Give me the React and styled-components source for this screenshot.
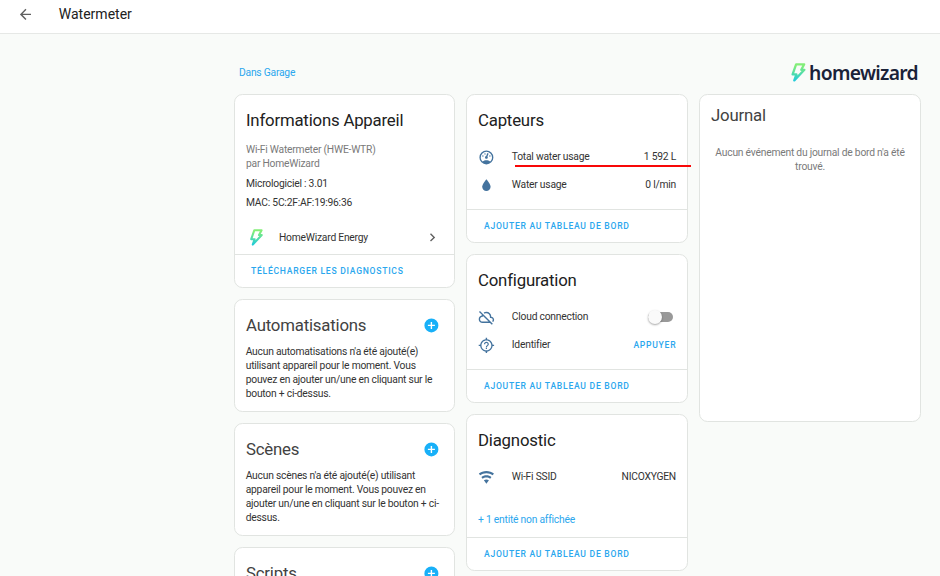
import React from 'react';
import styled, { createGlobalStyle } from 'styled-components';

const Global = createGlobalStyle`
  *, *::before, *::after { box-sizing: border-box; }
  body { margin: 0; background: #f9fbf9; overflow: hidden; font-family: Roboto, sans-serif; color: #333; }
`;

const Page = styled.div`
  width: 940px; height: 576px; overflow: hidden;
  font-size: 10.3px; line-height: 14px; letter-spacing: -0.23px;
`;
const TopBar = styled.header`
  display: flex; align-items: center; gap: 25px;
  height: 34px; padding: 0 0 5px 17px;
  background: #fff; border-bottom: 1px solid #e6e8e6;
`;
const PageTitle = styled.h1`
  margin: 0; font-size: 14px; line-height: 20px; font-weight: 400; letter-spacing: 0; color: #212121;
`;
const Icon = styled.svg`
  display: block; flex: none;
  width: 16.8px; height: 16.8px;
  fill: ${p => p.$color || '#44739e'};
`;
const Intro = styled.div`
  display: flex; justify-content: space-between; align-items: center;
  height: 28px; margin: 25px 22px 7px 239px;
`;
const Link = styled.a`color: #2ba7ee;`;
const Brand = styled.div`
  display: flex; align-items: center; gap: 3px; padding-bottom: 1px;
  font: 600 19.3px/24px "Noto Sans", sans-serif; color: #1a2238; letter-spacing: -0.68px;
`;
const Columns = styled.main`
  display: grid; grid-template-columns: 221px 222px 222px; gap: 11px;
  padding-left: 234px; align-items: start;
`;
const Column = styled.div`display: flex; flex-direction: column; gap: 11px;`;
const Card = styled.section`
  display: flex; flex-direction: column; height: ${p => p.$h}px;
  background: #fff; border: 1px solid #e1e4e1; border-radius: 8.4px;
`;
const CardHead = styled.div`
  display: flex; align-items: center; justify-content: space-between;
  height: ${p => (p.$compact ? 39 : 50)}px; padding: 0 14px 0 11px;
`;
const CardTitle = styled.h2`
  margin: 0; font-size: 16.8px; line-height: 24px; font-weight: 400; letter-spacing: -0.2px;
  color: ${p => (p.$soft ? '#424242' : '#212121')};
`;
const Info = styled.div`padding: 0 11px;`;
const Line = styled.p`
  margin: ${p => p.$top || 0}px 0 0; color: ${p => (p.$muted ? '#7a7a7a' : '#333')};
`;
const Integration = styled.div`
  display: flex; align-items: center; gap: 15px; height: 34px;
  margin-top: auto; padding: 1px 13.5px 0 14px;
`;
const Grow = styled.span`flex: 1;`;
const Footer = styled.footer`
  display: flex; align-items: center; height: 33px; padding: 0 16px 1px ${p => (p.$auto ? 17 : 16)}px;
  border-top: 1px solid #e1e4e1; margin-top: ${p => (p.$auto ? 'auto' : 0)};
`;
const Action = styled.button`
  border: 0; padding: 0; background: none; color: #2ba7ee;
  font: 500 8.6px/14px Roboto, sans-serif; letter-spacing: 0.73px; text-transform: uppercase;
  margin-right: -0.3px;
`;
const Paragraph = styled.p`
  margin: -5px 0 0; padding: 0 10.7px; white-space: pre-line;
`;
const Entities = styled.div`padding: 0 11px; margin-top: -2px;`;
const Entity = styled.div`
  position: relative; display: flex; align-items: center; gap: 17px; height: 28px;
`;
const Underline = styled.div`
  position: absolute; left: 37px; right: -15px; top: 22px; height: 2px; background: #f80808;
`;
const Track = styled.span`
  display: flex; align-items: center; width: 25px; height: 10px; margin: -1px 3px 0 0;
  border-radius: 5px; background: #999;
`;
const Thumb = styled.span`
  width: 14px; height: 14px; border-radius: 50%; background: #fafafa; flex: none;
  box-shadow: 0 1px 2px rgba(0,0,0,.35);
`;
const More = styled.div`color: #2ba7ee; padding: 22px 11px 0;`;
const Empty = styled.p`
  margin: 12px 0 0; padding: 0 12px; text-align: center; color: #7a7a7a; white-space: pre-line;
`;

const paths = {
  back: 'M20,11V13H8L13.5,18.5L12.08,19.92L4.16,12L12.08,4.08L13.5,5.5L8,11H20Z',
  gauge: 'M12 2A10 10 0 0 0 2 12A10 10 0 0 0 12 22A10 10 0 0 0 22 12A10 10 0 0 0 12 2M12 4A8 8 0 0 1 20 12C20 14.4 19 16.5 17.3 18C15.9 16.7 14 16 12 16S8.2 16.7 6.7 18C5 16.5 4 14.4 4 12A8 8 0 0 1 12 4M14 5.89C13.62 5.9 13.26 6.15 13.1 6.54L11.81 9.77L11.71 10C11 10.13 10.41 10.6 10.14 11.26C9.73 12.29 10.23 13.45 11.26 13.86C12.29 14.27 13.45 13.77 13.86 12.74C14.12 12.08 14 11.32 13.57 10.76L13.67 10.5L14.96 7.29L14.97 7.26C15.17 6.75 14.92 6.17 14.41 5.96C14.28 5.91 14.15 5.89 14 5.89M10 6A1 1 0 0 0 9 7A1 1 0 0 0 10 8A1 1 0 0 0 11 7A1 1 0 0 0 10 6M7 9A1 1 0 0 0 6 10A1 1 0 0 0 7 11A1 1 0 0 0 8 10A1 1 0 0 0 7 9M17 9A1 1 0 0 0 16 10A1 1 0 0 0 17 11A1 1 0 0 0 18 10A1 1 0 0 0 17 9Z',
  water: 'M12,20A6,6 0 0,1 6,14C6,10 12,3.25 12,3.25C12,3.25 18,10 18,14A6,6 0 0,1 12,20Z',
  cloudOff: 'M19.8 22.6L17.15 20H6.5Q4.2 20 2.6 18.4T1 14.5Q1 12.58 2.19 11.08T5.25 9.15Q5.33 8.95 5.4 8.76T5.55 8.35L1.4 4.2L2.8 2.8L21.2 21.2M6.5 18H15.15L7.1 9.95Q7.05 10.23 7.03 10.5T7 11H6.5Q5.05 11 4.03 12.03T3 14.5Q3 15.95 4.03 16.97T6.5 18M21.6 18.75L20.15 17.35Q20.58 17 20.79 16.54T21 15.5Q21 14.45 20.27 13.73T18.5 13H17V11Q17 8.93 15.54 7.46T12 6Q11.33 6 10.7 6.16T9.5 6.68L8.05 5.23Q8.93 4.63 9.91 4.31T12 4Q14.93 4 16.96 6.04T19 11Q20.73 11.2 21.86 12.5T23 15.5Q23 16.5 22.63 17.31T21.6 18.75Z',
  identify: 'M3.05 13H1V11H3.05C3.5 6.83 6.83 3.5 11 3.05V1H13V3.05C17.17 3.5 20.5 6.83 20.95 11H23V13H20.95C20.5 17.17 17.17 20.5 13 20.95V23H11V20.95C6.83 20.5 3.5 17.17 3.05 13M12 5C8.13 5 5 8.13 5 12S8.13 19 12 19 19 15.87 19 12 15.87 5 12 5M11.13 17.25H12.88V15.5H11.13V17.25M12 6.75C10.07 6.75 8.5 8.32 8.5 10.25H10.25C10.25 9.28 11.03 8.5 12 8.5S13.75 9.28 13.75 10.25C13.75 12 11.13 11.78 11.13 14.63H12.88C12.88 12.66 15.5 12.44 15.5 10.25C15.5 8.32 13.93 6.75 12 6.75Z',
  wifi: 'M12,21L15.6,16.2C14.6,15.45 13.35,15 12,15C10.65,15 9.4,15.45 8.4,16.2L12,21M12,3C7.95,3 4.21,4.34 1.2,6.6L3,9C5.5,7.12 8.62,6 12,6C15.38,6 18.5,7.12 21,9L22.8,6.6C19.79,4.34 16.05,3 12,3M12,9C9.3,9 6.81,9.89 4.8,11.4L6.6,13.8C8.1,12.67 9.97,12 12,12C14.03,12 15.9,12.67 17.4,13.8L19.2,11.4C17.19,9.89 14.7,9 12,9Z',
  plus: 'M17,13H13V17H11V13H7V11H11V7H13V11H17M12,2A10,10 0 0,0 2,12A10,10 0 0,0 12,22A10,10 0 0,0 22,12A10,10 0 0,0 12,2Z',
  chevron: 'M8.59,16.58L13.17,12L8.59,7.41L10,6L16,12L10,18L8.59,16.58Z',
};

const Glyph = ({ name, color }) => (
  <Icon viewBox="0 0 24 24" $color={color}><path fillRule="evenodd" d={paths[name]} /></Icon>
);

const BoltSvg = styled.svg`display: block; flex: none; width: ${p => p.$w}px; height: ${p => p.$h}px;`;
const Bolt = ({ id, w, h }) => (
  <BoltSvg viewBox="0 0 14 19" $w={w} $h={h}>
    <defs>
      <linearGradient id={id} x1="0" y1="0" x2="0" y2="1">
        <stop offset="0.1" stopColor="#83ee78" />
        <stop offset="1" stopColor="#22cbd8" />
      </linearGradient>
    </defs>
    <path d="M4.6 1.3H12.7L9.8 6.8H12.9L2.8 17.4L4.9 11.4H1.1Z"
      fill="none" stroke={`url(#${id})`} strokeWidth="2.3" strokeLinejoin="round" />
  </BoltSvg>
);

const EntityRow = ({ icon, name, children, marked }) => (
  <Entity>
    <Glyph name={icon} />
    <Grow>{name}</Grow>
    {children}
    {marked && <Underline />}
  </Entity>
);

const Dashboard = () => <Footer $auto><Action>Ajouter au tableau de bord</Action></Footer>;

const AddCard = ({ title, text }) => (
  <Card $h={113}>
    <CardHead><CardTitle $soft>{title}</CardTitle><Glyph name="plus" color="#18b0f8" /></CardHead>
    <Paragraph>{text}</Paragraph>
  </Card>
);

export default function App() {
  return (
    <Page>
      <Global />
      <TopBar><Glyph name="back" color="#616161" /><PageTitle>Watermeter</PageTitle></TopBar>
      <Intro>
        <Link>Dans Garage</Link>
        <Brand><Bolt id="brandBolt" w={15} h={19} /><span>homewizard</span></Brand>
      </Intro>
      <Columns>
        <Column>
          <Card $h={194}>
            <CardHead><CardTitle>Informations Appareil</CardTitle></CardHead>
            <Info>
              <Line $top={-2} $muted>Wi-Fi Watermeter (HWE-WTR)</Line>
              <Line $muted>par HomeWizard</Line>
              <Line $top={6}>Micrologiciel : 3.01</Line>
              <Line $top={5}>MAC: 5C:2F:AF:19:96:36</Line>
            </Info>
            <Integration>
              <Bolt id="energyBolt" w={15} h={17} />
              <Grow>HomeWizard Energy</Grow>
              <Glyph name="chevron" color="#616161" />
            </Integration>
            <Footer><Action>Télécharger les diagnostics</Action></Footer>
          </Card>
          <AddCard title="Automatisations" text={"Aucun automatisations n'a été ajouté(e)\nutilisant appareil pour le moment. Vous\npouvez en ajouter un/une en cliquant sur le\nbouton + ci-dessus."} />
          <AddCard title="Scènes" text={"Aucun scènes n'a été ajouté(e) utilisant\nappareil pour le moment. Vous pouvez en\najouter un/une en cliquant sur le bouton + ci-\ndessus."} />
          <AddCard title="Scripts" text="" />
        </Column>
        <Column>
          <Card $h={149}>
            <CardHead><CardTitle>Capteurs</CardTitle></CardHead>
            <Entities>
              <EntityRow icon="gauge" name="Total water usage" marked>1 592 L</EntityRow>
              <EntityRow icon="water" name="Water usage">0 l/min</EntityRow>
            </Entities>
            <Dashboard />
          </Card>
          <Card $h={149}>
            <CardHead><CardTitle>Configuration</CardTitle></CardHead>
            <Entities>
              <EntityRow icon="cloudOff" name="Cloud connection"><Track><Thumb /></Track></EntityRow>
              <EntityRow icon="identify" name="Identifier"><Action>Appuyer</Action></EntityRow>
            </Entities>
            <Dashboard />
          </Card>
          <Card $h={157}>
            <CardHead><CardTitle>Diagnostic</CardTitle></CardHead>
            <Entities><EntityRow icon="wifi" name="Wi-Fi SSID">NICOXYGEN</EntityRow></Entities>
            <More>+ 1 entité non affichée</More>
            <Dashboard />
          </Card>
        </Column>
        <Card $h={328}>
          <CardHead $compact><CardTitle $soft>Journal</CardTitle></CardHead>
          <Empty>{"Aucun événement du journal de bord n'a été\ntrouvé."}</Empty>
        </Card>
      </Columns>
    </Page>
  );
}
